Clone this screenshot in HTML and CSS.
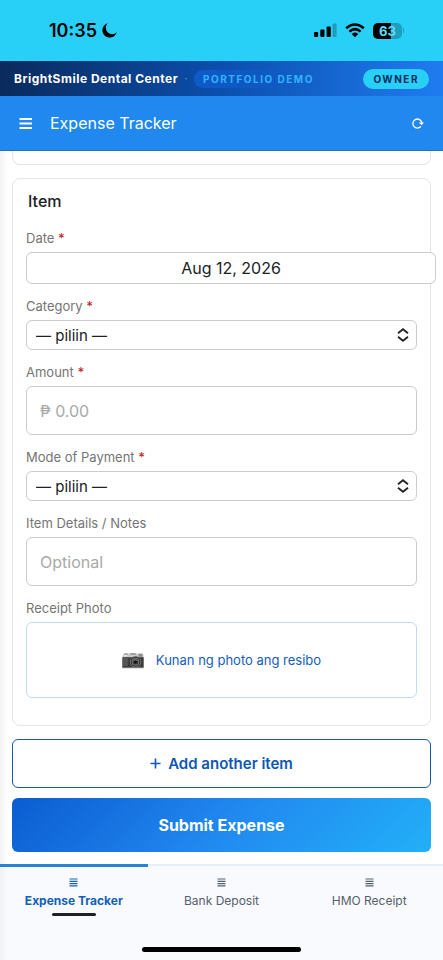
FILE: index.html
```html
<!DOCTYPE html>
<html lang="en">
<head>
<meta charset="utf-8">
<meta name="viewport" content="width=device-width, initial-scale=1">
<title>Expense Tracker</title>
<link rel="stylesheet" href="styles.css">
</head>
<body>
<div class="status">
  <div class="status-time">10:35
    <svg width="15" height="15" viewBox="0 0 15 15" aria-hidden="true"><path d="M5.600.3A7.300 7.300 0 1 0 14.700 9.300 5.600 5.600 0 0 1 5.600.3Z"/></svg>
  </div>
  <div class="status-icons">
    <svg width="23" height="15" viewBox="0 0 23 15" aria-hidden="true"><rect x="0" y="9" width="4.200" height="5" rx="1"/><rect x="6.300" y="6.500" width="4.200" height="7.500" rx="1"/><rect x="12.600" y="3.500" width="4.200" height="10.500" rx="1"/><rect x="18.600" y="0.500" width="4" height="13.500" rx="1" opacity=".25"/></svg>
    <svg width="20" height="15" viewBox="0 0 20 15" aria-hidden="true"><g fill="none" stroke="#000" stroke-width="2.500"><path d="M1.200 5.200Q10-2.300 18.800 5.200"/><path d="M4.400 8.600Q10 3.700 15.600 8.600"/></g><path d="M6.700 10.900Q10 8.200 13.300 10.900L10 14.300Z"/></svg>
    <span class="battery"><span class="battery-body">63</span><span class="battery-tip"></span></span>
  </div>
</div>
<div class="brand">
  <span class="brand-name">BrightSmile Dental Center</span>
  <span class="brand-dot">·</span>
  <span class="demo">PORTFOLIO DEMO</span>
  <span class="role">OWNER</span>
</div>
<header class="appbar">
  <button class="icon-button" type="button" aria-label="Menu"><svg width="14" height="12" viewBox="0 0 14 12"><path d="M.5 2h12.500M.5 6.500h12.500M.5 11h12.500" fill="none" stroke="#fff" stroke-width="1.800"/></svg></button>
  <h1>Expense Tracker</h1>
  <button class="icon-button" type="button" aria-label="Refresh"><svg width="12" height="12" viewBox="0 0 12 12"><path d="M8.800 9.500A4.500 4.500 0 1 1 9.700 5.200V6" fill="none" stroke="#fff" stroke-width="1.300"/><path d="M6.800 5.600h5.200L9.600 8.300Z" fill="#fff"/></svg></button>
</header>
<main>
  <div class="card-end"></div>
  <form class="form">
    <section class="card">
      <h2>Item</h2>
      <div class="field">
        <label for="date">Date <b>*</b></label>
        <input class="control date" id="date" type="text" value="Aug 12, 2026">
      </div>
      <div class="field">
        <label for="category">Category <b>*</b></label>
        <div class="select">
          <select class="control" id="category"><option>— piliin —</option></select>
          <svg width="12" height="14" viewBox="0 0 12 14" aria-hidden="true"><path d="M1 5.200 6 1.200l5 4M1 8.800l5 4 5-4"/></svg>
        </div>
      </div>
      <div class="field">
        <label for="amount">Amount <b>*</b></label>
        <input class="control tall" id="amount" type="text" placeholder="₱ 0.00">
      </div>
      <div class="field">
        <label for="mode">Mode of Payment <b>*</b></label>
        <div class="select">
          <select class="control" id="mode"><option>— piliin —</option></select>
          <svg width="12" height="14" viewBox="0 0 12 14" aria-hidden="true"><path d="M1 5.200 6 1.200l5 4M1 8.800l5 4 5-4"/></svg>
        </div>
      </div>
      <div class="field">
        <label for="notes">Item Details / Notes</label>
        <input class="control tall" id="notes" type="text" placeholder="Optional">
      </div>
      <div class="field">
        <label for="photo">Receipt Photo</label>
        <button class="photo" id="photo" type="button">
          <svg width="22" height="18" viewBox="0 -2 22 18" aria-hidden="true">
            <path d="M1 1.500 2 .6h18l1.500 1V5H.5Z" fill="#c9c9c9"/>
            <path d="M2.500.2h3v1.500h-3ZM8.500 0h5l.8 1.800H8Z" fill="#999"/>
            <rect x="16.500" y=".8" width="4" height="3" fill="#8d8d8d"/>
            <rect x="2" y="2" width="3" height="1.200" fill="#eee"/>
            <rect x=".3" y="4.200" width="21.400" height="10" fill="#3c3c3c"/>
            <path d="M1 5h5v8H1Z" fill="#555"/>
            <rect x=".3" y="14" width="21.400" height="1.200" fill="#777"/>
            <circle cx="13.500" cy="8.800" r="5.800" fill="#777"/>
            <circle cx="13.500" cy="8.800" r="4.900" fill="#292929"/>
            <circle cx="13.500" cy="8.800" r="3.600" fill="#444" stroke="#999" stroke-width=".7"/>
            <circle cx="13.500" cy="8.800" r="2" fill="#161616"/>
            <path d="M11.500 7.800q2-2 4 0" fill="none" stroke="#aaa" stroke-width=".7"/>
          </svg>
          <span>Kunan ng photo ang resibo</span>
        </button>
      </div>
    </section>
    <button class="add" type="button"><svg width="11" height="11" viewBox="0 0 11 11" aria-hidden="true"><path d="M5.500.5v10M.5 5.500h10" fill="none" stroke="#0b57b5" stroke-width="1.600"/></svg>Add another item</button>
    <button class="submit" type="submit">Submit Expense</button>
  </form>
</main>
<nav class="tabs">
  <a class="tab active" href="#expense"><svg width="9" height="9" viewBox="0 0 9 9" aria-hidden="true"><path d="M.5 1h8M.5 3.300h8M.5 5.600h8M.5 7.900h8"/></svg><span>Expense Tracker</span></a>
  <a class="tab" href="#bank"><svg width="9" height="9" viewBox="0 0 9 9" aria-hidden="true"><path d="M.5 1h8M.5 3.300h8M.5 5.600h8M.5 7.900h8"/></svg><span>Bank Deposit</span></a>
  <a class="tab" href="#hmo"><svg width="9" height="9" viewBox="0 0 9 9" aria-hidden="true"><path d="M.5 1h8M.5 3.300h8M.5 5.600h8M.5 7.900h8"/></svg><span>HMO Receipt</span></a>
</nav>
<div class="home"><span></span></div>
</body>
</html>
```
FILE: styles.css
```css
* { box-sizing: border-box; }
body {
  margin: 0;
  min-height: 100vh;
  display: flex;
  flex-direction: column;
  font-family: Inter, "Liberation Sans", sans-serif;
  color: #202124;
  background: #fff;
}
button, input, select { font-family: inherit; margin: 0; }
button { cursor: pointer; }
svg { display: block; flex: none; }

.status {
  display: flex;
  justify-content: space-between;
  align-items: center;
  height: 61px;
  padding: 0 39px 0 49px;
  background: #28d0f8;
  color: #000;
}
.status-time { display: flex; align-items: center; gap: 5px; font-size: 18px; font-weight: 600; }
.status-icons { display: flex; align-items: center; gap: 8px; }
.battery { display: flex; align-items: center; gap: 1px; }
.battery-body {
  width: 29px;
  border-radius: 5px;
  background: linear-gradient(90deg, #000 63%, #1d9fbe 63%);
  color: #5edcf8;
  font-size: 13px;
  line-height: 16px;
  font-weight: 700;
  text-align: center;
}
.battery-tip { width: 1px; height: 5px; background: #1d9fbe; }

.brand {
  display: flex;
  align-items: center;
  height: 35px;
  padding: 0 14px;
  background: linear-gradient(90deg, #0a2a5c 0%, #0b4fae 50%, #1f7cf0 100%);
  color: #fff;
}
.brand-name { font-size: 12px; font-weight: 700; letter-spacing: 0.5px; }
.brand-dot { width: 16px; text-align: center; font-size: 12px; color: #5d8bc4; }
.demo {
  padding: 0 9px;
  border-radius: 9px;
  background: linear-gradient(90deg, #0f5bcb, #0f5bcb00);
  color: #2fb4fa;
  font-size: 10px;
  line-height: 18px;
  font-weight: 700;
  letter-spacing: 1.5px;
}
.role {
  margin-left: auto;
  padding: 0 10px;
  border-radius: 10px;
  background: #28d0f8;
  color: #0a2a5c;
  font-size: 10px;
  line-height: 20px;
  font-weight: 700;
  letter-spacing: 1.5px;
}

.appbar {
  display: flex;
  align-items: center;
  height: 55px;
  padding: 0 16px;
  background: #2188f0;
  border-bottom: 1px solid #1c72ca;
  color: #fff;
}
.appbar h1 { flex: 1; margin: 0 0 0 14px; font-size: 16px; line-height: 24px; font-weight: 400; }
.icon-button { padding: 3px; border: 0; background: none; }

main {
  flex: 1;
  padding: 0 12px 11px;
  background: linear-gradient(90deg, #f3f3f3, #fff 8px);
}
.card-end { height: 14px; border: solid #e4e4e4; border-width: 0 1px 1px; border-radius: 0 0 8px 8px; background: #fff; }
.form { display: flex; flex-direction: column; margin-top: 13px; }
.card { padding: 10px 13px 14px; border: 1px solid #e4e4e4; border-radius: 8px; background: #fff; }
.card h2 { margin: 0 2px 16px; font-size: 16px; line-height: 24px; font-weight: 500; }
.field { display: flex; flex-direction: column; margin-bottom: 13px; }
.field label { margin-bottom: 5px; font-size: 13px; line-height: 18px; color: #757575; }
.field label b { color: #c62828; font-weight: 500; }
.control {
  width: 100%;
  height: 30px;
  padding: 0 9px;
  border: 1px solid #ccc;
  border-radius: 6px;
  background: #fff;
  color: #202124;
  font-size: 16px;
}
.control.date { width: calc(100% + 19px); height: 32px; text-align: center; }
.control.tall { height: 49px; padding: 0 13px; }
.control::placeholder { color: #a9a9a9; opacity: 1; }
.select { display: grid; align-items: center; }
.select > * { grid-area: 1 / 1; }
.select select { appearance: none; font-size: 15px; }
.select svg { justify-self: end; margin-right: 8px; pointer-events: none; fill: none; stroke: #222; stroke-width: 1.8; }
.photo {
  display: flex;
  align-items: center;
  justify-content: center;
  gap: 12px;
  height: 76px;
  border: 1px solid #bfdcf2;
  border-radius: 6px;
  background: #fff;
  color: #1460b8;
  font-size: 13px;
}
.add, .submit { display: flex; align-items: center; justify-content: center; border-radius: 6px; font-size: 16px; }
.add { gap: 7px; height: 49px; margin-top: 13px; border: 1px solid #145cae; background: #fff; color: #0b57b5; font-size: 15px; font-weight: 600; }
.submit { height: 54px; margin-top: 10px; border: 0; background: linear-gradient(135deg, #0b5cd0, #2188f0 50%, #22b0f7); color: #fff; font-weight: 700; }

.tabs { display: grid; grid-template-columns: repeat(3, 1fr); background: linear-gradient(90deg, #f1f2f6, #f9fafe 8px); }
.tab {
  display: flex;
  flex-direction: column;
  align-items: center;
  gap: 5px;
  padding: 12px 0 2px;
  border-top: 2px solid #e8eef7;
  color: #55606b;
  font-size: 12px;
  line-height: 18px;
  text-decoration: none;
}
.tab svg { fill: none; stroke: currentColor; stroke-width: 1.2; }
.tab.active { padding-top: 11px; border-top: 3px solid #2b82d9; color: #1460b8; font-weight: 700; }
.tab.active::after { content: ""; width: 44px; height: 3px; margin-top: -2px; border-radius: 2px; background: #202124; }
.home { display: flex; justify-content: center; padding: 29px 0 8px; background: linear-gradient(90deg, #f1f2f6, #f9fafe 8px); }
.home span { width: 36%; height: 5px; border-radius: 3px; background: #000; }
```
